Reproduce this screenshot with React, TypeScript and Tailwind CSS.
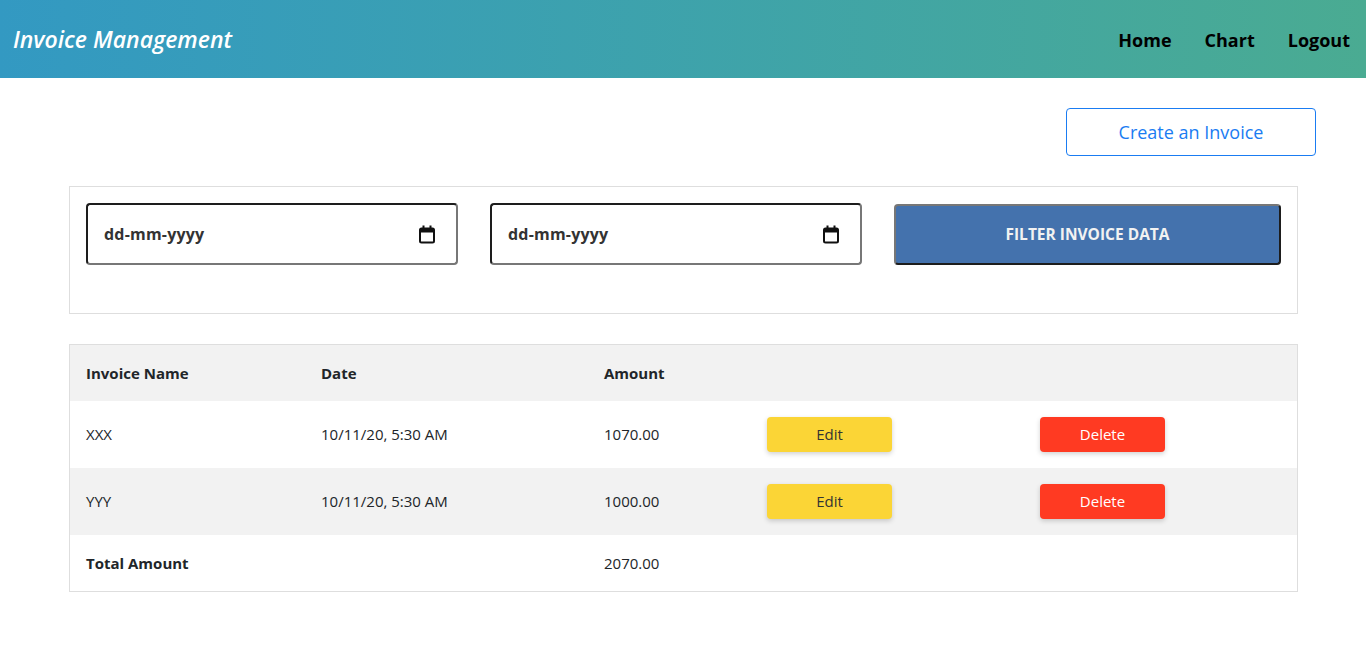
import React from "react";

const font = { fontFamily: '"Open Sans", "Noto Sans", sans-serif' };

const CalendarIcon = () => (
  <svg width="18" height="19" viewBox="0 0 18 19" className="shrink-0">
    <rect x="2" y="3.5" width="14" height="14" rx="1.5" fill="none" stroke="#111" strokeWidth="2" />
    <rect x="2" y="3.5" width="14" height="4" fill="#111" />
    <rect x="4.5" y="0.5" width="2" height="4" fill="#111" />
    <rect x="11.5" y="0.5" width="2" height="4" fill="#111" />
  </svg>
);

const DateField = () => (
  <div className="flex h-[62px] items-center justify-between rounded-[4px] border-2 border-t-[#1d1d1d] border-l-[#1d1d1d] border-r-[#777] border-b-[#777] bg-white pl-4 pr-5">
    <span className="text-[16px] font-bold tracking-[0.2px] text-[#333]">dd-mm-yyyy</span>
    <CalendarIcon />
  </div>
);

const rows = [
  { name: "XXX", date: "10/11/20, 5:30 AM", amount: "1070.00" },
  { name: "YYY", date: "10/11/20, 5:30 AM", amount: "1000.00" },
];

const grid = "grid grid-cols-[235px_283px_163px_273px_275px] items-center";

export default function App() {
  return (
    <div className="min-h-screen bg-white text-[#212529]" style={font}>
      <header className="flex h-[78px] items-center justify-between bg-gradient-to-r from-[#3399c2] to-[#4aab92] pl-[13px] pr-4">
        <h1 className="mt-px text-[23px] font-semibold italic text-white">Invoice Management</h1>
        <nav className="mt-[2px] flex gap-[33px] text-[18px] font-bold text-black">
          <a>Home</a>
          <a>Chart</a>
          <a>Logout</a>
        </nav>
      </header>

      <main className="pl-[69px] pr-[68px]">
        <div className="flex justify-end pt-[30px]">
          <button className="mr-[-18px] h-[48px] w-[250px] rounded-[4px] border border-[#1a7cf2] pt-px text-[18px] text-[#1a7cf2]">
            Create an Invoice
          </button>
        </div>

        <section className="mt-[30px] h-[128px] border border-[#dedede] p-[16px]">
          <div className="grid grid-cols-[372px_372px_387px] gap-[32px]">
            <DateField />
            <DateField />
            <button className="mt-px h-[61px] rounded-[4px] border-2 border-t-[#777] border-l-[#777] border-r-[#1d1d1d] border-b-[#1d1d1d] bg-[#4472ad] text-[15.5px] font-bold text-[#f2f2f2]">
              FILTER INVOICE DATA
            </button>
          </div>
        </section>

        <section className="mt-[30px] border border-[#dedede] text-[15px]">
          <div className={`${grid} h-[56px] bg-[#f2f2f2] font-bold`}>
            <div className="pl-4">Invoice Name</div>
            <div className="pl-4">Date</div>
            <div className="pl-4">Amount</div>
            <div />
            <div />
          </div>
          {rows.map((r, i) => (
            <div key={r.name} className={`${grid} h-[67px] ${i % 2 === 1 ? "bg-[#f2f2f2]" : "bg-white"}`}>
              <div className="pl-4">{r.name}</div>
              <div className="pl-4">{r.date}</div>
              <div className="pl-4">{r.amount}</div>
              <div className="pl-4">
                <button className="h-[35px] w-[125px] rounded-[4px] bg-[#fbd536] text-[15px] text-[#333] shadow-[0_2px_5px_rgba(0,0,0,0.18)]">
                  Edit
                </button>
              </div>
              <div className="pl-4">
                <button className="h-[35px] w-[125px] rounded-[4px] bg-[#ff3a22] text-[15px] text-white shadow-[0_2px_5px_rgba(0,0,0,0.18)]">
                  Delete
                </button>
              </div>
            </div>
          ))}
          <div className={`${grid} h-[56px]`}>
            <div className="pl-4 font-bold">Total Amount</div>
            <div />
            <div className="pl-4">2070.00</div>
            <div />
            <div />
          </div>
        </section>
      </main>
    </div>
  );
}
